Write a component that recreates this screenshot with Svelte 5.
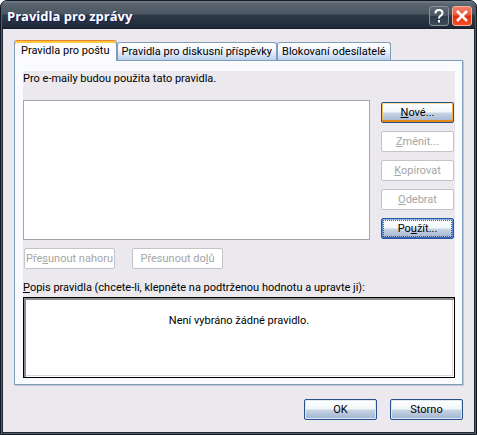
<script lang="ts">
  let tabs = ['Pravidla pro poštu', 'Pravidla pro diskusní příspěvky', 'Blokovaní odesílatelé'];
  let activeTab = $state(0);

  // [before, access key, after]
  let ruleButtons = [
    { label: ['', 'N', 'ové...'], kind: 'default', disabled: false },
    { label: ['', 'Z', 'měnit...'], kind: '', disabled: true },
    { label: ['', 'K', 'opírovat'], kind: '', disabled: true },
    { label: ['', 'O', 'debrat'], kind: '', disabled: true },
    { label: ['Po', 'u', 'žít...'], kind: 'focused', disabled: false }
  ];

  let moveButtons = [
    ['Pře', 's', 'unout nahoru'],
    ['Přesunout do', 'l', 'ů']
  ];
</script>

{#snippet mnemonic(label: string[])}{label[0]}<u>{label[1]}</u>{label[2]}{/snippet}

<div class="window">
  <header>
    <h1>Pravidla pro zprávy</h1>
    <button class="caption help" aria-label="Nápověda">
      <svg viewBox="0 0 20 20" width="20" height="20">
        <path d="M6.500 7.500V7Q6.500 4 10 4T13.500 7Q13.500 8.500 11.700 9.700Q10 10.700 10 12.500" fill="none" stroke="#fff" stroke-width="2" />
        <path d="M9 14h2v2.500h-2z" fill="#fff" />
      </svg>
    </button>
    <button class="caption close" aria-label="Zavřít">
      <svg viewBox="0 0 20 20" width="20" height="20">
        <path d="M5 5L15 15M15 5L5 15" fill="none" stroke="#fff" stroke-width="2.500" />
      </svg>
    </button>
  </header>

  <main>
    <div class="tabs" role="tablist">
      {#each tabs as tab, i}
        <button
          role="tab"
          class="tab"
          class:active={activeTab === i}
          aria-selected={activeTab === i}
          onclick={() => { activeTab = i; }}
        >{tab}</button>
      {/each}
    </div>

    <div class="panel" role="tabpanel">
      <div class="page">
        <p id="rules-label">Pro e-maily budou použita tato pravidla.</p>

        <div class="rules">
          <div class="list" role="listbox" tabindex="0" aria-labelledby="rules-label"></div>
          <div class="rule-buttons">
            {#each ruleButtons as b}
              <button class="push {b.kind}" disabled={b.disabled}>{@render mnemonic(b.label)}</button>
            {/each}
          </div>
        </div>

        <div class="move-buttons">
          {#each moveButtons as label}
            <button class="push" disabled>{@render mnemonic(label)}</button>
          {/each}
        </div>

        <p class="description-label" id="description-label"><u>P</u>opis pravidla (chcete-li, klepněte na podtrženou hodnotu a upravte ji):</p>
        <div class="description" role="region" aria-labelledby="description-label">Není vybráno žádné pravidlo.</div>
      </div>
    </div>

    <footer>
      <button class="push">OK</button>
      <button class="push">Storno</button>
    </footer>
  </main>
</div>

<style>
  :global(body) {
    background: #fff;
  }

  .window {
    box-sizing: border-box;
    font: 11px/16px Roboto, "Liberation Sans", sans-serif;
    color: #000;
    background: #4f5b69;
    border: 1px solid #131a26;
    border-radius: 7px 7px 0 0;
    padding: 0 1px 1px;
    overflow: hidden;
  }

  header {
    display: flex;
    align-items: center;
    gap: 3px;
    height: 28px;
    box-sizing: border-box;
    padding: 2px 3px 0 5px;
    background: linear-gradient(#747f89 0, #59646f 3px, #4a5661 13px, #303b49 14px, #202a39 26px, #121a28 28px);
  }

  h1 {
    flex: 1;
    margin: 0;
    font: bold 13px/18px "Open Sans", "Noto Sans", sans-serif;
    color: #fff;
    text-shadow: 1px 1px 0 #161e66;
  }

  button {
    font: inherit;
    color: inherit;
    margin: 0;
    padding: 0;
    white-space: nowrap;
  }

  .caption {
    width: 20px;
    height: 20px;
    border: 1px solid #87909a;
    border-radius: 3px;
    background: linear-gradient(#5d6872, #4a5561 50%, #303b49 50%, #3d4a58);
    display: flex;
    align-items: center;
    justify-content: center;
  }

  .caption svg {
    flex: none;
  }

  .caption.close {
    border-color: #f0b0a0;
    background: linear-gradient(#f08068, #ee5a38 45%, #e62a05 50%, #f4502a);
  }

  main {
    background: #ebe9ed;
    border: 1px solid #202a38;
    border-top: 0;
    padding: 11px 11px 12px;
  }

  .tabs {
    display: flex;
    align-items: flex-end;
    height: 20px;
  }

  .tab {
    height: 18px;
    padding: 0 4px;
    border: 1px solid #7f9db9;
    border-bottom: 0;
    border-radius: 3px 3px 0 0;
    background: linear-gradient(#fff, #f3f7fd 40%, #b9d0ef);
  }

  .tab.active {
    position: relative;
    height: 21px;
    padding: 0 6px 1px;
    margin-bottom: -1px;
    border-top-color: #e5862d;
    background: #fcfcfe;
    box-shadow: inset 0 2px 0 #ffc83c;
  }

  .panel {
    border: 1px solid #7f9db9;
    box-shadow: 1px 1px 0 #c5c8d0;
    background: #fafbff;
    padding: 10px 7px 6px 8px;
  }

  .page {
    background: #ebe9ed;
  }

  p {
    margin: 0;
  }

  .rules {
    display: flex;
    gap: 11px;
    padding: 13px 1px 0 0;
  }

  .list {
    flex: 1;
    border: 1px solid #a5a5a5;
    background: #fff;
  }

  .rule-buttons {
    display: flex;
    flex-direction: column;
    gap: 8px;
    padding: 2px 0 1px;
  }

  .push {
    box-sizing: border-box;
    width: 73px;
    height: 21px;
    border: 1px solid #28508c;
    border-radius: 2px;
    background: linear-gradient(#fff, #f2f7f9 48%, #c9d5e5 52%, #9fb2d0);
    box-shadow: inset 0 0 0 1px #dfe8f5;
  }

  .push:disabled {
    color: #a5a5a5;
    background: #fff;
    border-color: #c4c3c9;
    box-shadow: none;
  }

  .push.default {
    box-shadow: inset 0 1px 0 #fbe3a0, inset 0 -2px 0 #e58a1a, inset 1px 0 0 #f5c05e, inset -1px 0 0 #f5b04e;
  }

  .push.focused {
    border-color: #2a55a5;
    box-shadow: inset 0 1px 0 #8ab4e8, inset 0 -1px 0 #4068b8, inset 1px 0 0 #5f8bd0, inset -1px 0 0 #5f8bd0;
    outline: 1px dotted #555;
    outline-offset: -3px;
  }

  .move-buttons {
    display: flex;
    gap: 17px;
    padding: 8px 1px 11px;
  }

  .move-buttons .push {
    width: 91px;
  }

  .description-label {
    padding-bottom: 1px;
  }

  .description {
    box-sizing: border-box;
    height: 81px;
    padding: 15px 14px;
    text-align: center;
    background: #fff;
    border: 1px solid #000;
    box-shadow: inset 2px 2px 0 #8c8c8c, inset -1px -1px 0 #fff, inset -2px -2px 0 #d8d8d8;
  }

  footer {
    display: flex;
    justify-content: flex-end;
    gap: 13px;
    padding-top: 14px;
  }
</style>
